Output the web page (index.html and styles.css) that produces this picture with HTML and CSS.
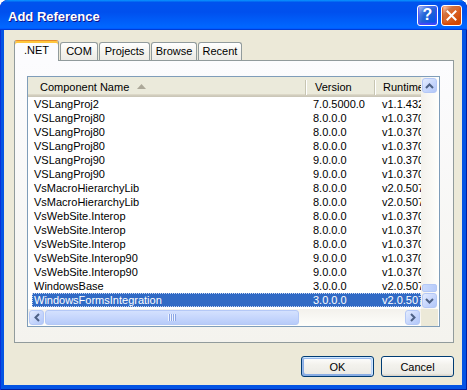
FILE: index.html
```html
<!DOCTYPE html>
<html>
<head>
<meta charset="utf-8">
<title>Add Reference</title>
<link rel="stylesheet" href="styles.css">
</head>
<body>
<div class="window">
  <div class="titlebar">
    <span class="title">Add Reference</span>
    <div class="tb-buttons">
      <span class="tb-btn help">?</span>
      <span class="tb-btn close"><svg width="11" height="11" viewBox="0 0 11 11"><path d="M1.5 1.5 L9.5 9.5 M9.5 1.5 L1.5 9.5" stroke="#fff" stroke-width="2" stroke-linecap="square"/></svg></span>
    </div>
  </div>
  <div class="client">
    <div class="tabs">
      <div class="tab active tab-net">.NET</div>
      <div class="tab tab-com">COM</div>
      <div class="tab tab-proj">Projects</div>
      <div class="tab tab-browse">Browse</div>
      <div class="tab tab-recent">Recent</div>
    </div>
    <div class="panel">
      <div class="listview">
        <div class="lv-main">
          <div class="lv-header">
            <div class="hcol h-name">Component Name<svg class="sort" width="9" height="5" viewBox="0 0 9 5"><path d="M4.5 0 L9 5 L0 5 Z" fill="#ACA899"/></svg></div>
            <span class="hsep"></span>
            <div class="hcol h-ver">Version</div>
            <span class="hsep"></span>
            <div class="hcol h-rt">Runtime</div>
          </div>
          <div class="rows">
            <div class="row"><span class="c-name">VSLangProj2</span><span class="c-ver">7.0.5000.0</span><span class="c-rt">v1.1.4322</span></div>
            <div class="row"><span class="c-name">VSLangProj80</span><span class="c-ver">8.0.0.0</span><span class="c-rt">v1.0.3705</span></div>
            <div class="row"><span class="c-name">VSLangProj80</span><span class="c-ver">8.0.0.0</span><span class="c-rt">v1.0.3705</span></div>
            <div class="row"><span class="c-name">VSLangProj80</span><span class="c-ver">8.0.0.0</span><span class="c-rt">v1.0.3705</span></div>
            <div class="row"><span class="c-name">VSLangProj90</span><span class="c-ver">9.0.0.0</span><span class="c-rt">v1.0.3705</span></div>
            <div class="row"><span class="c-name">VSLangProj90</span><span class="c-ver">9.0.0.0</span><span class="c-rt">v1.0.3705</span></div>
            <div class="row"><span class="c-name">VsMacroHierarchyLib</span><span class="c-ver">8.0.0.0</span><span class="c-rt">v2.0.50727</span></div>
            <div class="row"><span class="c-name">VsMacroHierarchyLib</span><span class="c-ver">8.0.0.0</span><span class="c-rt">v2.0.50727</span></div>
            <div class="row"><span class="c-name">VsWebSite.Interop</span><span class="c-ver">8.0.0.0</span><span class="c-rt">v1.0.3705</span></div>
            <div class="row"><span class="c-name">VsWebSite.Interop</span><span class="c-ver">8.0.0.0</span><span class="c-rt">v1.0.3705</span></div>
            <div class="row"><span class="c-name">VsWebSite.Interop</span><span class="c-ver">8.0.0.0</span><span class="c-rt">v1.0.3705</span></div>
            <div class="row"><span class="c-name">VsWebSite.Interop90</span><span class="c-ver">9.0.0.0</span><span class="c-rt">v1.0.3705</span></div>
            <div class="row"><span class="c-name">VsWebSite.Interop90</span><span class="c-ver">9.0.0.0</span><span class="c-rt">v1.0.3705</span></div>
            <div class="row"><span class="c-name">WindowsBase</span><span class="c-ver">3.0.0.0</span><span class="c-rt">v2.0.50727</span></div>
            <div class="row selected"><span class="c-name">WindowsFormsIntegration</span><span class="c-ver">3.0.0.0</span><span class="c-rt">v2.0.50727</span></div>
          </div>
        </div>
        <div class="vscroll">
          <div class="sbtn vbtn"><svg width="9" height="6" viewBox="0 0 9 6"><path d="M1 5 L4.5 1.5 L8 5" fill="none" stroke="#4D6185" stroke-width="2"/></svg></div>
          <div class="vtrack"><div class="vthumb"></div></div>
          <div class="sbtn vbtn"><svg width="9" height="6" viewBox="0 0 9 6"><path d="M1 1 L4.5 4.5 L8 1" fill="none" stroke="#4D6185" stroke-width="2"/></svg></div>
        </div>
        <div class="hscroll">
          <div class="sbtn hbtn"><svg width="6" height="9" viewBox="0 0 6 9"><path d="M5 1 L1.5 4.5 L5 8" fill="none" stroke="#4D6185" stroke-width="2"/></svg></div>
          <div class="htrack"><div class="hthumb"><span class="grip"></span></div></div>
          <div class="sbtn hbtn"><svg width="6" height="9" viewBox="0 0 6 9"><path d="M1 1 L4.5 4.5 L1 8" fill="none" stroke="#4D6185" stroke-width="2"/></svg></div>
        </div>
        <div class="corner"></div>
      </div>
    </div>
    <div class="buttons">
      <button class="btn default">OK</button>
      <button class="btn">Cancel</button>
    </div>
  </div>
</div>
</body>
</html>
```
FILE: styles.css
```css
* { box-sizing: border-box; }
html, body { margin: 0; padding: 0; background: #fff; }
body {
  width: 467px; height: 390px; overflow: hidden;
  font-family: "Liberation Sans", Arial, sans-serif;
  font-size: 11px; color: #000;
}
.window {
  width: 467px; height: 390px;
  display: flex; flex-direction: column;
  background: #0454E4;
  border-radius: 8px 8px 0 0;
  box-shadow: inset 1px 0 #0831D9, inset -1px 0 #001EA0, inset 0 -1px #001EA0;
  overflow: hidden;
}
.titlebar {
  height: 30px; flex: none;
  display: flex; align-items: center; justify-content: space-between;
  padding: 0 5px 0 8px;
  border-radius: 8px 8px 0 0;
  background: linear-gradient(180deg, #0997ff, #0053ee 8%, #0050ee 40%, #06f 88%, #06f 93%, #005bff 95%, #003dd7 96%, #003dd7);
}
.title {
  color: #fff; font-weight: bold; font-size: 13px;
  text-shadow: 1px 1px #0F1089;
  padding-top: 2px;
}
.tb-buttons { display: flex; gap: 3px; }
.tb-btn {
  width: 21px; height: 21px;
  border: 1px solid #fff; border-radius: 3px;
  display: flex; align-items: center; justify-content: center;
  color: #fff; font-weight: bold; font-size: 16px; line-height: 1;
}
.help {
  background: radial-gradient(circle at 90% 90%, #0054e9 0%, #2263d5 55%, #4479e4 70%, #a3bbec 90%, #fff 100%);
  box-shadow: inset 0 -1px 2px 1px #4646ff;
}
.close {
  background: radial-gradient(circle at 90% 90%, #cc4600 0%, #dc6527 55%, #cd7546 70%, #ffccb2 90%, #fff 100%);
  box-shadow: inset 0 -1px 2px 1px #da4600;
}
.client {
  flex: 1;
  margin: 0 5px 5px 4px;
  background: #ECE9D8;
  padding: 10px 8px 0 10px;
  display: flex; flex-direction: column;
}
.tabs {
  display: flex; align-items: flex-end;
  height: 20px; flex: none;
  position: relative; z-index: 1;
}
.tab {
  height: 18px;
  border: 1px solid #919B9C; border-bottom: none;
  border-radius: 3px 3px 0 0;
  background: linear-gradient(180deg, #fff, #F3F2EC 60%, #ECEBE6);
  text-align: center; line-height: 17px;
  margin-left: 1px;
}
.tab.active {
  height: 21px; margin-bottom: -1px; margin-left: 0;
  background: #FCFCFE;
  border-top-color: #E68B2C;
  box-shadow: inset 0 2px #FFC73C;
  line-height: 17px;
  padding-top: 1px;
}
.tab-net { width: 45px; }
.tab-com { width: 38px; }
.tab-proj { width: 51px; }
.tab-browse { width: 46px; }
.tab-recent { width: 44px; }
.panel {
  height: 283px; flex: none;
  border: 1px solid #919B9C;
  background: linear-gradient(180deg, #FCFCFE, #F4F3EE);
  padding: 15px 0 0 12px;
}
.listview {
  width: 413px; height: 251px;
  border: 1px solid #7F9DB9;
  background: #fff;
  display: grid;
  grid-template-columns: 393px 17px;
  grid-template-rows: 232px 17px;
}
.lv-main { overflow: hidden; }
.lv-header {
  height: 20px;
  display: flex; align-items: center;
  background: linear-gradient(180deg, #EBEADB 0, #EBEADB 17px, #E2DECD 17px, #D6D2C2 18px, #CBC7B8 19px);
  white-space: nowrap;
}
.hcol { flex: none; padding-bottom: 1px; }
.h-name { width: 277px; padding-left: 12px; display: flex; align-items: center; }
.sort { margin-left: 8px; }
.hsep {
  flex: none; width: 2px; height: 15px;
  border-left: 1px solid #C7C5B2; border-right: 1px solid #fff;
}
.h-ver { width: 67px; padding-left: 8px; }
.h-rt { width: 80px; padding-left: 7px; }
.rows { padding-top: 0; }
.row {
  display: flex; height: 14px; line-height: 14px;
  margin-left: 4px; white-space: nowrap;
}
.row span { flex: none; overflow: hidden; }
.c-name { width: 273px; padding-left: 2px; }
.c-ver { width: 69px; padding-left: 8px; }
.c-rt { width: 80px; padding-left: 8px; }
.row.selected {
  background: #316AC5; color: #fff;
  outline: 1px dotted #C9D7F0; outline-offset: -1px;
}
.vscroll {
  display: flex; flex-direction: column;
  background: linear-gradient(90deg, #F3F1EC, #FEFEFB);
  padding: 1px;
}
.hscroll {
  display: flex;
  background: linear-gradient(180deg, #F3F1EC, #FEFEFB);
  padding: 1px;
}
.corner { background: #ECE9D8; }
.sbtn {
  flex: none;
  display: flex; align-items: center; justify-content: center;
  border: 1px solid #B4C8F6; border-radius: 3px;
  background: linear-gradient(135deg, #E4ECFE, #C3D4FC 60%, #B2C7F8);
}
.vbtn { width: 15px; height: 15px; }
.hbtn { width: 15px; height: 15px; }
.vtrack { flex: 1; display: flex; flex-direction: column; justify-content: flex-end; }
.vthumb {
  height: 8px; margin-bottom: 1px;
  border: 1px solid #B4C8F6; border-radius: 2px;
  background: linear-gradient(90deg, #C9D9FD, #B8CCFA);
}
.htrack { flex: 1; display: flex; padding: 0 1px; }
.hthumb {
  width: 254px;
  border: 1px solid #B4C8F6; border-radius: 3px;
  background: linear-gradient(180deg, #D4E1FE, #C3D4FC 60%, #B7CBF9);
  display: flex; align-items: center; justify-content: center;
}
.grip {
  width: 8px; height: 7px;
  background: repeating-linear-gradient(90deg, #EEF4FE 0 1px, #8CA6E6 1px 2px);
}
.buttons {
  display: flex; justify-content: flex-end; gap: 7px;
  margin-top: 13px;
}
.btn {
  width: 73px; height: 21px; padding: 0;
  border: 1px solid #003C74; border-radius: 3px;
  background: linear-gradient(180deg, #fff, #F3F2ED 40%, #ECEBE6 86%, #D6D0C5);
  font-family: "Liberation Sans", Arial, sans-serif; font-size: 11px; color: #000;
}
.btn.default {
  box-shadow: inset -1px 1px #cee7ff, inset 1px 2px #98b8ea, inset -2px 2px #bcd4f6, inset 1px -1px #89ade4, inset 2px -2px #89ade4;
}
```
